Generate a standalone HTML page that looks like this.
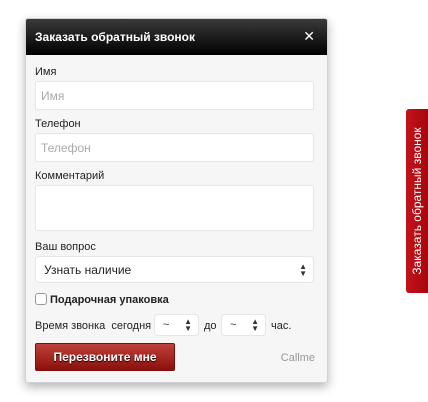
<!DOCTYPE html>
<html><head><meta charset="utf-8"><style>
*{box-sizing:border-box;margin:0;padding:0}
body{width:428px;height:402px;background:#fff;font-family:"Liberation Sans","DejaVu Sans",sans-serif;font-size:11px;color:#333;position:relative;overflow:hidden}
.modal{position:absolute;left:25px;top:18px;width:303px;height:365px;background:#f6f6f6;border:1px solid #cfd3d8;border-radius:3px;box-shadow:0 4px 10px rgba(0,0,0,.3)}
.hd{height:36px;background:linear-gradient(#3a3a3a,#000);color:#fff;font-weight:bold;font-size:12px;padding:11px 9px;position:relative;border-radius:2px 2px 0 0}
.hd .x{position:absolute;right:12px;top:9px;font-size:14px;font-weight:bold}
.a{position:absolute;left:9px;width:279px}
.lbl{font-size:11px;color:#222}
.in{background:#fff;border:1px solid #e6e6e6;border-radius:2px;color:#aaa;font-size:12px;padding:7px 5px}
.sel{background:#fff;border:1px solid #e6e6e6;border-radius:4px;position:absolute}
.arr{position:absolute;right:6px;top:50%;transform:translateY(-50%);font-size:8px;line-height:7px;color:#333}
.btn{position:absolute;left:9px;top:324px;width:140px;height:28px;background:linear-gradient(#c0403a,#8a100c);border-radius:2px;color:#fff;font-weight:bold;font-size:12px;text-align:center;line-height:26px;text-shadow:0 1px 1px #000;border:1px solid #7a0f0b}
.tab{position:absolute;left:406px;top:109px;width:22px;height:184px;background:linear-gradient(90deg,#c3131a,#a5060d);border-radius:3px 0 0 3px}
.tab span{position:absolute;left:50%;top:50%;transform:translate(-50%,-50%) rotate(-90deg);white-space:nowrap;color:#fff;font-size:12px}
</style></head><body>
<div class="modal">
<div class="hd">Заказать обратный звонок<span class="x">✕</span></div>
<div class="a lbl" style="top:47px">Имя</div>
<div class="a in" style="top:62px;height:29px">Имя</div>
<div class="a lbl" style="top:99px">Телефон</div>
<div class="a in" style="top:114px;height:29px">Телефон</div>
<div class="a lbl" style="top:151px">Комментарий</div>
<div class="a in" style="top:166px;height:46px"></div>
<div class="a lbl" style="top:222px">Ваш вопрос</div>
<div class="sel" style="left:9px;top:237px;width:279px;height:27px;font-size:12px;color:#222;padding:6px 8px">Узнать наличие<span class="arr">▲<br>▼</span></div>
<div class="a" style="top:274px;font-weight:bold;font-size:11px;color:#222"><span style="display:inline-block;width:12px;height:12px;border:1px solid #999;border-radius:3px;background:#fff;vertical-align:-2px;margin-right:3px"></span>Подарочная упаковка</div>
<div class="a lbl" style="top:301px">Время звонка&nbsp; сегодня</div>
<div class="sel" style="left:128px;top:295px;width:45px;height:22px;padding:4px 8px;font-size:11px">~<span class="arr">▲<br>▼</span></div>
<div class="lbl" style="position:absolute;left:178px;top:301px">до</div>
<div class="sel" style="left:195px;top:295px;width:45px;height:22px;padding:4px 8px;font-size:11px">~<span class="arr">▲<br>▼</span></div>
<div class="lbl" style="position:absolute;left:245px;top:301px">час.</div>
<div class="btn">Перезвоните мне</div>
<div style="position:absolute;right:12px;top:333px;color:#999;font-size:11px">Callme</div>
</div>
<div class="tab"><span>Заказать обратный звонок</span></div>
</body></html>
